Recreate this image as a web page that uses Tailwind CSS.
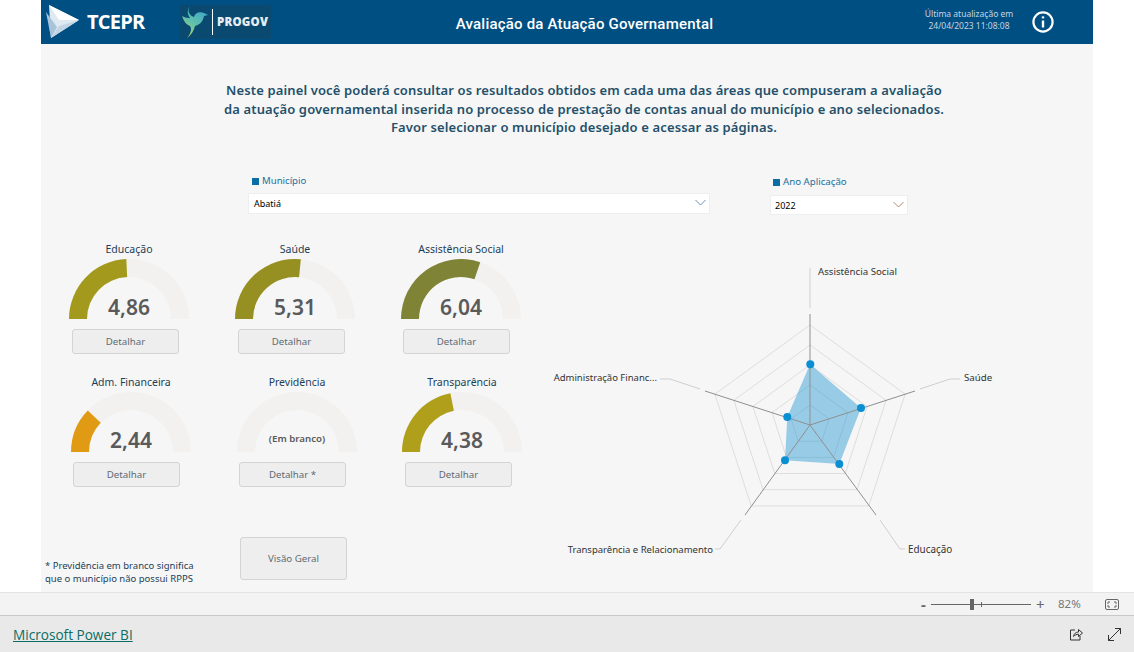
<!DOCTYPE html>
<html lang="pt-BR">
<head>
  <meta charset="UTF-8">
  <title>Avaliação da Atuação Governamental</title>
  <script src="https://cdn.jsdelivr.net/npm/@tailwindcss/browser@4"></script>
</head>
<body class="bg-white font-['Noto_Sans',sans-serif]">
  <div class="w-[1134px] h-[652px] flex flex-col overflow-hidden">

    <!-- Report canvas -->
    <div class="ml-[41px] w-[1052px] h-[592px] bg-[#f6f6f6] flex flex-col shrink-0">

      <!-- Header -->
      <header class="h-[44px] bg-[#004f83] flex items-center shrink-0 text-white">
        <svg class="ml-[5px] w-[34px] h-[34px]" viewBox="0 0 34 34">
          <path d="M3 0 L33 15 L5 33 Z" fill="#dfe9f2"/>
          <path d="M0 7 L5 33 L11 22 Z" fill="#a9c4da"/>
          <path d="M3 0 L33 15 L13 15 Z" fill="#ffffff"/>
          <path d="M5 33 L33 15 L13 21 Z" fill="#c3d5e4"/>
        </svg>
        <span class="ml-[7px] w-[60px] text-[20px] leading-none font-bold font-['Open_Sans',sans-serif] tracking-[-0.8px]">TCEPR</span>
        <div class="ml-[33px] w-[91px] h-[34px] bg-[#0a4a70] flex items-center">
          <svg class="w-[30px] h-[34px]" viewBox="0 0 30 34">
            <defs>
              <linearGradient id="bird" x1="0.7" y1="0" x2="0.2" y2="1">
                <stop offset="0" stop-color="#3aa6cf"/>
                <stop offset="0.55" stop-color="#62c0a8"/>
                <stop offset="1" stop-color="#b5d565"/>
              </linearGradient>
            </defs>
            <path d="M10 1 C7 6 9 10 14 12 C15 8 19 6 24 8 L28 10 L24 11 C23 17 19 20 15 21 C14 26 11 30 7 33 C11 28 12 24 10 21 C7 20 4 17 2 11 C6 13 8 13 10 13 C7 9 7 5 10 1 Z" fill="url(#bird)"/>
          </svg>
          <span class="ml-[2px] w-px h-[26px] bg-white"></span>
          <span class="ml-[4px] text-[11.5px] leading-none font-extrabold text-[#e8eef3] tracking-[0.2px] font-['Open_Sans',sans-serif]">PROGOV</span>
        </div>
        <h1 class="ml-[184px] mt-[4px] w-[259px] text-center text-[15px] font-medium font-['Roboto',sans-serif] tracking-[0.2px] whitespace-nowrap">Avaliação da Atuação Governamental</h1>
        <div class="ml-[205px] -mt-[4px] w-[100px] text-center text-[8.5px] leading-[12.5px] text-[#c5d4e0]">
          <p>Última atualização em</p>
          <p>24/04/2023 11:08:08</p>
        </div>
        <svg class="ml-[13px] -mt-[1px] w-[22px] h-[22px]" viewBox="0 0 22 22" fill="none" stroke="white">
          <circle cx="11" cy="11" r="9.6" stroke-width="2.2"/>
          <path d="M11 9.5 V16.5" stroke-width="2.4"/>
          <path d="M11 5.4 V7.4" stroke-width="2.4"/>
        </svg>
      </header>

      <!-- Intro -->
      <div class="ml-[17px] mt-[37px] w-[1052px] text-center text-[13px] leading-[18.5px] font-semibold text-[#24506a] tracking-[0.13px]">
        <p>Neste painel você poderá consultar os resultados obtidos em cada uma das áreas que compuseram a avaliação</p>
        <p>da atuação governamental inserida no processo de prestação de contas anual do município e ano selecionados.</p>
        <p>Favor selecionar o município desejado e acessar as páginas.</p>
      </div>

      <!-- Filters -->
      <div class="mt-[37px] flex items-start">
        <div class="ml-[207px] w-[462px]">
          <div class="ml-[4px] h-[16px] flex items-center gap-[3px] text-[9.6px] text-[#1c6f9f]">
            <span class="w-[7px] h-[7px] bg-[#0a6ea5]"></span>Município
          </div>
          <div class="mt-[3px] pt-[2px] h-[21px] bg-white border border-[#eeeeee] flex items-center justify-between pl-[5px] pr-[3px] text-[9px] text-black">
            Abatiá
            <svg class="w-[11px] h-[7px] -mt-[3px]" viewBox="0 0 11 7" fill="none" stroke="#6d8fb0"><path d="M0.5 1 L5.5 6 L10.5 1"/></svg>
          </div>
        </div>
        <div class="ml-[60px] w-[138px]">
          <div class="ml-[3px] mt-[1px] h-[16px] flex items-center gap-[3px] text-[9.7px] text-[#1c6f9f]">
            <span class="w-[7px] h-[7px] bg-[#0a6ea5]"></span>Ano Aplicação
          </div>
          <div class="mt-[4px] pt-[2px] h-[20px] bg-white border border-[#eeeeee] flex items-center justify-between pl-[4px] pr-[3px] text-[9px] text-black">
            2022
            <svg class="w-[11px] h-[7px] -mt-[3px]" viewBox="0 0 11 7" fill="none" stroke="#b08a70"><path d="M0.5 1 L5.5 6 L10.5 1"/></svg>
          </div>
        </div>
      </div>

      <!-- Gauges and radar -->
      <div class="flex-1 flex items-start">
        <div class="w-[499px] shrink-0">
          <!-- Row 1 -->
          <div class="mt-[26px] ml-[28px] flex gap-[46px]">
            <div class="w-[120px]">
              <p class="h-[16px] leading-[16px] text-center text-[10.5px] text-[#1c3f58]">Educação</p>
              <div class="relative mt-[2px] h-[60px]">
                <svg class="w-[120px] h-[60px]" viewBox="0 0 120 60">
                  <path d="M0 60 A60 60 0 0 1 120 60 H102 A42 42 0 0 0 18 60 Z" fill="#f2f1ef"/>
                  <path d="M0 60 A60 60 0 0 1 57.36 0.06 L58.15 18.04 A42 42 0 0 0 18 60 Z" fill="#a39a1d"/>
                </svg>
                <span class="absolute inset-x-0 bottom-[-2px] text-center text-[21px] leading-[28px] font-semibold text-[#5a5a5a]">4,86</span>
              </div>
              <button class="block mt-[10px] ml-[3px] pt-[2px] w-[107px] h-[25px] bg-[#eeeeee] border border-[#d4d4d4] rounded-[3px] text-[9.7px] text-[#5f6b73]">Detalhar</button>
            </div>
            <div class="w-[120px]">
              <p class="h-[16px] leading-[16px] text-center text-[10.5px] text-[#1c3f58]">Saúde</p>
              <div class="relative mt-[2px] h-[60px]">
                <svg class="w-[120px] h-[60px]" viewBox="0 0 120 60">
                  <path d="M0 60 A60 60 0 0 1 120 60 H102 A42 42 0 0 0 18 60 Z" fill="#f2f1ef"/>
                  <path d="M0 60 A60 60 0 0 1 65.83 0.28 L64.08 18.20 A42 42 0 0 0 18 60 Z" fill="#969022"/>
                </svg>
                <span class="absolute inset-x-0 bottom-[-2px] text-center text-[21px] leading-[28px] font-semibold text-[#5a5a5a]">5,31</span>
              </div>
              <button class="block mt-[10px] ml-[3px] pt-[2px] w-[107px] h-[25px] bg-[#eeeeee] border border-[#d4d4d4] rounded-[3px] text-[9.7px] text-[#5f6b73]">Detalhar</button>
            </div>
            <div class="w-[120px]">
              <p class="h-[16px] leading-[16px] text-center text-[10.5px] text-[#1c3f58]">Assistência Social</p>
              <div class="relative mt-[2px] h-[60px]">
                <svg class="w-[120px] h-[60px]" viewBox="0 0 120 60">
                  <path d="M0 60 A60 60 0 0 1 120 60 H102 A42 42 0 0 0 18 60 Z" fill="#f2f1ef"/>
                  <path d="M0 60 A60 60 0 0 1 79.25 3.17 L73.48 20.22 A42 42 0 0 0 18 60 Z" fill="#7f8335"/>
                </svg>
                <span class="absolute inset-x-0 bottom-[-2px] text-center text-[21px] leading-[28px] font-semibold text-[#5a5a5a]">6,04</span>
              </div>
              <button class="block mt-[10px] ml-[2px] pt-[2px] w-[107px] h-[25px] bg-[#eeeeee] border border-[#d4d4d4] rounded-[3px] text-[9.7px] text-[#5f6b73]">Detalhar</button>
            </div>
          </div>
          <!-- Row 2 -->
          <div class="mt-[20px] ml-[30px] flex gap-[46px]">
            <div class="w-[120px]">
              <p class="h-[16px] leading-[16px] text-center text-[10.5px] text-[#1c3f58]">Adm. Financeira</p>
              <div class="relative mt-[2px] h-[60px]">
                <svg class="w-[120px] h-[60px]" viewBox="0 0 120 60">
                  <path d="M0 60 A60 60 0 0 1 120 60 H102 A42 42 0 0 0 18 60 Z" fill="#f2f1ef"/>
                  <path d="M0 60 A60 60 0 0 1 16.78 18.38 L29.75 30.86 A42 42 0 0 0 18 60 Z" fill="#e09a13"/>
                </svg>
                <span class="absolute inset-x-0 bottom-[-2px] text-center text-[21px] leading-[28px] font-semibold text-[#5a5a5a]">2,44</span>
              </div>
              <button class="block mt-[10px] ml-[2px] pt-[2px] w-[107px] h-[25px] bg-[#eeeeee] border border-[#d4d4d4] rounded-[3px] text-[9.7px] text-[#5f6b73]">Detalhar</button>
            </div>
            <div class="w-[120px]">
              <p class="h-[16px] leading-[16px] text-center text-[10.5px] text-[#1c3f58]">Previdência</p>
              <div class="relative mt-[2px] h-[60px]">
                <svg class="w-[120px] h-[60px]" viewBox="0 0 120 60">
                  <path d="M0 60 A60 60 0 0 1 120 60 H102 A42 42 0 0 0 18 60 Z" fill="#f2f1ef"/>
                </svg>
                <span class="absolute inset-x-0 bottom-[3px] text-center text-[9.7px] leading-[20px] font-semibold text-[#5a5a5a]">(Em branco)</span>
              </div>
              <button class="block mt-[10px] ml-[2px] pt-[2px] w-[107px] h-[25px] bg-[#eeeeee] border border-[#d4d4d4] rounded-[3px] text-[9.7px] text-[#5f6b73]">Detalhar *</button>
            </div>
            <div class="w-[120px] -ml-[1px]">
              <p class="h-[16px] leading-[16px] text-center text-[10.5px] text-[#1c3f58]">Transparência</p>
              <div class="relative mt-[2px] h-[60px]">
                <svg class="w-[120px] h-[60px]" viewBox="0 0 120 60">
                  <path d="M0 60 A60 60 0 0 1 120 60 H102 A42 42 0 0 0 18 60 Z" fill="#f2f1ef"/>
                  <path d="M0 60 A60 60 0 0 1 48.38 1.13 L51.87 18.79 A42 42 0 0 0 18 60 Z" fill="#b09f1a"/>
                </svg>
                <span class="absolute inset-x-0 bottom-[-2px] text-center text-[21px] leading-[28px] font-semibold text-[#5a5a5a]">4,38</span>
              </div>
              <button class="block mt-[10px] ml-[3px] pt-[2px] w-[107px] h-[25px] bg-[#eeeeee] border border-[#d4d4d4] rounded-[3px] text-[9.7px] text-[#5f6b73]">Detalhar</button>
            </div>
          </div>
          <!-- Footnote and overview button -->
          <div class="mt-[50px] flex items-end">
            <p class="ml-[4px] w-[195px] -mb-[5px] text-[9.5px] leading-[13px] text-[#1c3f58]">* Previdência em branco significa<br>que o município não possui RPPS</p>
            <button class="pt-[2px] w-[107px] h-[43px] bg-[#eeeeee] border border-[#d4d4d4] rounded-[3px] text-[9.7px] text-[#5f6b73]">Visão Geral</button>
          </div>
        </div>

        <!-- Radar, origin at the canvas x=540 y=255 -->
        <svg class="mt-[40px] w-[460px] h-[310px] shrink-0" viewBox="540 255 460 310" font-size="9.5" fill="#333333">
          <g fill="none" stroke="#dedede" stroke-width="1">
            <polygon points="810,325 905.1,394.1 868.8,505.9 751.2,505.9 714.9,394.1"/>
            <polygon points="810,345 886.1,400.3 857,489.7 763,489.7 733.9,400.3"/>
            <polygon points="810,365 867.1,406.5 845.3,473.5 774.7,473.5 752.9,406.5"/>
            <polygon points="810,385 848,412.6 833.5,457.4 786.5,457.4 772,412.6"/>
            <polygon points="810,405 829,418.8 821.8,441.2 798.2,441.2 791,418.8"/>
          </g>
          <polygon points="810,364.3 861,408 839.3,464 785,460.3 787.3,417" fill="#0d8fd0" fill-opacity="0.4"/>
          <g stroke="#8f8f8f" stroke-width="1">
            <path d="M810 425 V314"/>
            <path d="M810 425 L915 391"/>
            <path d="M810 425 L705 391"/>
            <path d="M810 425 L876 515"/>
            <path d="M810 425 L745 515"/>
          </g>
          <g fill="none" stroke="#cfcfcf" stroke-width="1">
            <path d="M810 308 V268"/>
            <path d="M920 389 L950 379 H960"/>
            <path d="M700 389 L670 379 H660"/>
            <path d="M880 520 L900 549 H905"/>
            <path d="M741 520 L720 549 H715"/>
          </g>
          <g fill="#0b8fd3">
            <circle cx="810.3" cy="364.3" r="4"/>
            <circle cx="861" cy="408" r="4"/>
            <circle cx="839.3" cy="464" r="4"/>
            <circle cx="785" cy="460.3" r="4"/>
            <circle cx="787.3" cy="417" r="4"/>
          </g>
          <text x="818" y="274.5" font-size="9.7">Assistência Social</text>
          <text x="964" y="380.5" font-size="9.7">Saúde</text>
          <text x="908" y="552.5" font-size="9.9">Educação</text>
          <text x="713" y="552.5" text-anchor="end">Transparência e Relacionamento</text>
          <text x="657" y="380.5" text-anchor="end">Administração Financ...</text>
        </svg>
      </div>
    </div>

    <!-- Zoom bar -->
    <div class="h-[24px] bg-[#f3f3f3] border-t border-t-[#e4e4e4] border-b border-b-[#c8c8c8] flex items-center shrink-0 text-[#666666]">
      <span class="ml-[921px] w-[7px] text-[15px] leading-none font-bold">-</span>
      <div class="relative ml-[3px] w-[100px] h-px bg-[#666666]">
        <span class="absolute left-[39px] top-[-5px] w-[4px] h-[11px] bg-[#666666]"></span>
        <span class="absolute left-[50px] top-[-2px] w-px h-[5px] bg-[#666666]"></span>
      </div>
      <span class="ml-[5px] w-[10px] text-[15px] leading-none">+</span>
      <span class="ml-[12px] w-[30px] text-[11.5px] text-[#777777]">82%</span>
      <svg class="ml-[17px] w-[14px] h-[11px]" viewBox="0 0 14 11" fill="none" stroke="#666666">
        <rect x="0.5" y="0.5" width="13" height="10" rx="1.5"/>
        <path d="M3 5 V3 H5 M9 3 H11 V5 M11 6 V8 H9 M5 8 H3 V6"/>
      </svg>
    </div>

    <!-- Footer -->
    <footer class="flex-1 bg-[#e9e9e9] flex items-center">
      <a class="ml-[13px] mt-[3px] text-[13.6px] text-[#0a6e66] underline font-['Open_Sans',sans-serif]" href="#">Microsoft Power BI</a>
      <svg class="ml-auto w-[14px] h-[14px]" viewBox="0 0 14 14" fill="none" stroke="#333333">
        <path d="M6 3 H1.5 V13 H11 V9"/>
        <path d="M4.5 9.5 C5 6.5 7 5 9.5 5 V2.5 L13.5 6 L9.5 9.5 V7.2 C7.5 7.2 6 8 4.5 9.5 Z"/>
      </svg>
      <svg class="ml-[25px] mr-[13px] w-[13px] h-[13px]" viewBox="0 0 13 13" fill="none" stroke="#333333">
        <path d="M0.5 12.5 L12.5 0.5 M7 0.5 H12.5 V6 M0.5 7 V12.5 H6"/>
      </svg>
    </footer>
  </div>
</body>
</html>
